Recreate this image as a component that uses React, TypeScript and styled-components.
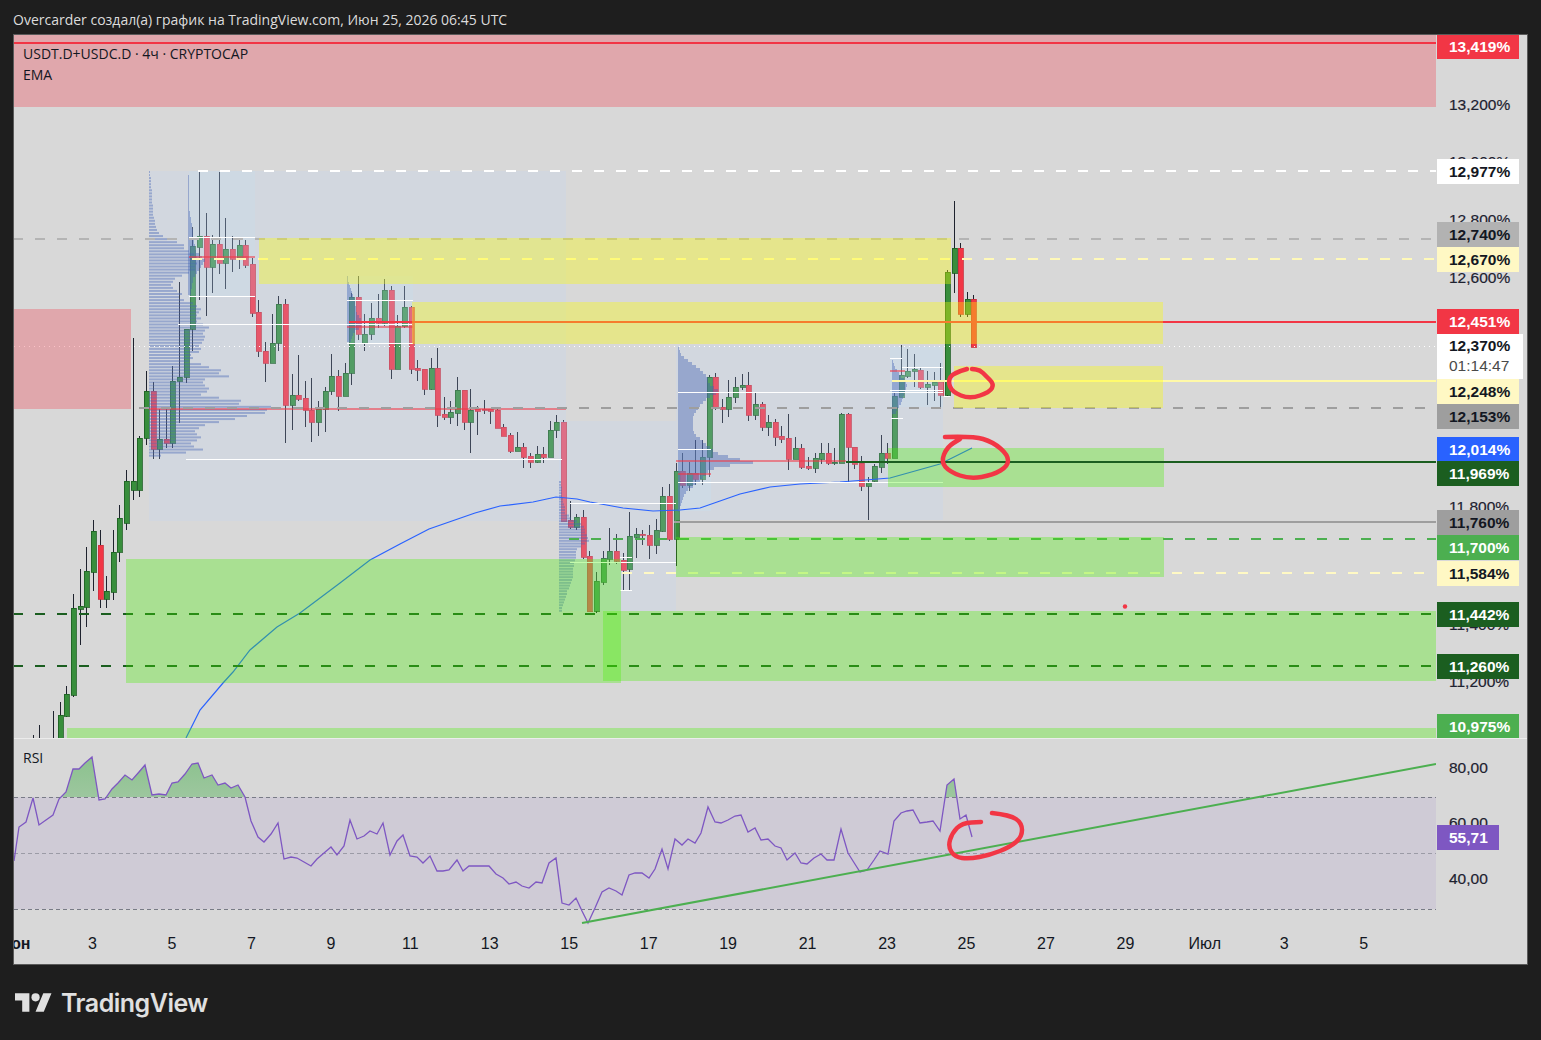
import React from "react";
import styled, {createGlobalStyle} from "styled-components";

// candles: [colour, body top, body bottom, wick top, wick bottom], first one sits at index -12
type Candle = [string, number, number, number, number]
const candles: Candle[] = [
    ["g", 715, 745, 702, 750], ["g", 694, 716, 686, 717], ["g", 608, 695, 594, 697], ["g", 606, 609, 569, 645],
    ["g", 571, 607, 547, 627], ["g", 531, 572, 520, 591], ["r", 545, 599, 530, 608], ["g", 591, 599, 576, 608],
    ["g", 552, 592, 530, 600], ["g", 518, 552, 505, 562], ["g", 481, 523, 470, 530], ["g", 481, 490, 338, 500],
    ["g", 438, 490, 436, 497], ["g", 391, 438, 371, 445], ["r", 391, 449, 382, 459], ["g", 439, 449, 409, 459],
    ["r", 439, 443, 409, 448], ["g", 381, 443, 366, 448], ["g", 377, 381, 282, 423], ["g", 329, 377, 329, 383],
    ["g", 246, 329, 227, 351], ["g", 236, 247, 172, 300], ["r", 236, 267, 213, 316], ["g", 244, 267, 235, 293],
    ["r", 244, 263, 172, 274], ["g", 249, 263, 218, 289], ["r", 249, 259, 236, 272], ["g", 245, 259, 240, 269],
    ["r", 245, 265, 240, 268], ["r", 264, 313, 258, 317], ["r", 312, 351, 300, 357], ["r", 351, 363, 342, 382],
    ["g", 343, 363, 314, 360], ["g", 304, 343, 296, 351], ["r", 304, 405, 299, 443], ["g", 395, 405, 374, 430],
    ["r", 395, 399, 355, 401], ["r", 398, 410, 381, 427], ["r", 410, 422, 378, 442], ["g", 409, 422, 401, 436],
    ["g", 391, 409, 387, 432], ["g", 376, 391, 354, 395], ["r", 376, 396, 370, 411], ["g", 373, 396, 363, 396],
    ["g", 297, 373, 293, 385], ["r", 297, 334, 276, 340], ["g", 334, 343, 314, 351], ["g", 318, 334, 303, 340],
    ["r", 318, 323, 294, 328], ["g", 290, 323, 279, 326], ["r", 290, 369, 286, 379], ["g", 326, 369, 315, 369],
    ["g", 307, 326, 286, 328], ["r", 307, 369, 306, 374], ["r", 368, 370, 360, 381], ["r", 369, 389, 369, 395],
    ["g", 368, 389, 358, 390], ["r", 368, 415, 348, 427], ["r", 414, 417, 397, 420], ["g", 412, 417, 401, 424],
    ["g", 390, 413, 377, 426], ["r", 390, 422, 390, 430], ["g", 410, 422, 389, 453], ["r", 409, 411, 406, 435],
    ["r", 409, 410, 400, 414], ["r", 409, 411, 409, 424], ["r", 410, 428, 408, 428], ["r", 427, 436, 424, 436],
    ["r", 435, 451, 433, 453], ["g", 447, 451, 432, 451], ["r", 447, 457, 443, 468], ["r", 456, 462, 453, 468],
    ["g", 454, 462, 446, 463], ["r", 454, 457, 447, 463], ["g", 430, 457, 421, 457], ["g", 422, 430, 415, 438],
    ["r", 422, 521, 420, 521], ["r", 520, 527, 501, 529], ["g", 517, 527, 514, 530], ["r", 517, 557, 510, 559],
    ["r", 556, 611, 551, 611], ["g", 581, 611, 572, 613], ["g", 558, 582, 551, 585], ["g", 551, 559, 528, 565],
    ["r", 551, 561, 534, 564], ["r", 560, 570, 553, 591], ["g", 536, 569, 512, 591], ["g", 534, 537, 528, 558],
    ["r", 534, 535, 530, 545], ["r", 535, 545, 525, 559], ["g", 530, 545, 519, 554], ["g", 496, 531, 487, 532],
    ["r", 496, 539, 484, 541], ["g", 471, 539, 463, 566], ["r", 471, 485, 453, 488], ["g", 473, 485, 462, 491],
    ["r", 473, 479, 440, 485], ["g", 457, 479, 440, 485], ["g", 377, 457, 375, 477], ["r", 377, 407, 373, 410],
    ["r", 407, 409, 399, 423], ["g", 397, 409, 380, 417], ["g", 387, 397, 377, 403], ["g", 385, 387, 374, 390],
    ["r", 385, 415, 372, 421], ["g", 404, 415, 393, 420], ["r", 404, 427, 402, 431], ["g", 422, 427, 415, 436],
    ["r", 422, 437, 419, 446], ["r", 436, 439, 426, 443], ["r", 438, 459, 414, 470], ["g", 448, 459, 437, 459],
    ["r", 448, 467, 444, 469], ["r", 466, 468, 457, 470], ["g", 458, 468, 453, 473], ["g", 453, 459, 443, 464],
    ["r", 453, 463, 443, 465], ["g", 462, 463, 448, 465], ["g", 414, 463, 413, 463], ["r", 414, 447, 413, 483],
    ["r", 447, 464, 447, 469], ["r", 463, 486, 456, 491], ["g", 482, 486, 477, 520], ["g", 466, 481, 464, 483],
    ["g", 453, 467, 435, 473], ["r", 453, 458, 443, 464], ["g", 396, 458, 393, 458], ["g", 375, 397, 345, 397],
    ["g", 371, 376, 349, 378], ["g", 369, 371, 354, 387], ["r", 370, 387, 368, 389], ["g", 384, 387, 371, 405],
    ["g", 382, 385, 372, 401], ["r", 382, 395, 363, 407], ["g", 272, 395, 270, 397], ["g", 248, 273, 201, 293],
    ["r", 248, 314, 243, 317], ["g", 299, 314, 292, 317], ["r", 299, 347, 295, 347],
]

const rsiPoints = [
    [14, 861], [19, 827], [26, 822], [33, 798], [39, 825], [46, 820], [53, 815], [59, 799], [66, 792], [73, 769],
    [79, 769], [85, 763], [92, 757], [99, 800], [105, 799], [112, 789], [118, 783], [125, 775], [132, 780], [139, 772],
    [145, 765], [152, 795], [159, 794], [166, 795], [172, 783], [178, 782], [185, 774], [192, 764], [198, 763], [204, 778],
    [212, 775], [218, 785], [225, 783], [231, 788], [238, 785], [245, 797], [251, 821], [258, 837], [264, 842], [271, 834],
    [278, 823], [284, 859], [291, 857], [297, 858], [304, 862], [311, 866], [317, 859], [324, 853], [331, 847], [337, 855],
    [344, 846], [350, 820], [357, 839], [364, 836], [370, 831], [377, 834], [383, 823], [390, 855], [397, 841], [403, 835],
    [410, 856], [417, 857], [423, 863], [430, 856], [437, 871], [443, 871], [449, 870], [457, 860], [463, 871], [469, 866],
    [489, 866], [496, 874], [503, 878], [509, 884], [516, 882], [522, 886], [529, 888], [536, 882], [542, 883], [549, 863],
    [556, 858], [562, 903], [569, 905], [576, 898], [582, 911], [588, 923], [595, 908], [602, 892], [609, 888], [616, 891],
    [622, 895], [629, 875], [635, 873], [642, 873], [649, 878], [655, 869], [662, 849], [668, 869], [675, 839], [682, 845],
    [688, 839], [695, 843], [701, 833], [708, 807], [715, 822], [721, 823], [728, 820], [735, 816], [741, 815], [748, 832],
    [755, 828], [761, 840], [768, 839], [775, 846], [781, 848], [787, 860], [795, 853], [801, 863], [807, 864], [814, 858],
    [821, 854], [827, 860], [834, 860], [841, 829], [848, 853], [853, 861], [860, 872], [867, 870], [874, 860], [880, 851],
    [888, 854], [894, 821], [901, 813], [907, 811], [913, 810], [920, 823], [927, 822], [933, 821], [940, 831], [947, 785],
    [954, 779], [960, 819], [966, 815], [972, 837],
]

const emaPoints = "186,738 200,710 223,683 233,672 250,650 277,627 300,613 340,583 370,560 400,544 429,529 475,513 500,506 533,502 556,497 577,499 590,502 623,508 653,511 680,510 700,508 740,494 770,487 800,484 840,482 890,478 940,464 972,448"

// volume profile rows, widths in px from top to bottom
const profileA = [
    1, 1, 2, 2, 2, 2, 3, 3, 3, 3, 3, 4, 4, 4, 4, 5, 6, 6, 7, 8, 10, 14, 18, 28, 35, 35, 40, 45, 48, 47, 48, 46,
    46, 40, 33, 26, 24, 22, 24, 28, 33, 30, 35, 44, 48, 52, 50, 48, 52, 48, 54, 60, 56, 54, 56, 55, 53, 50, 52, 50,
    42, 44, 40, 52, 60, 72, 70, 80, 56, 54, 56, 60, 58, 52, 70, 92, 90, 122, 118, 116, 98, 86, 70, 56, 50, 46, 48, 52, 48, 42, 45, 54, 37, 12,
]
const profileB = [
    2, 2, 3, 3, 3, 3, 4, 4, 5, 6, 6, 6, 10, 12, 18, 22, 25, 26, 26, 28, 29, 30, 26, 22, 18, 17, 17, 17, 16, 15,
    15, 14, 14, 14, 14, 13, 12, 11, 10, 8, 8, 7, 6, 5, 4, 3, 3,
]
const profileC = [
    1, 2, 3, 6, 10, 14, 18, 22, 25, 28, 30, 30, 32, 36, 40, 38, 32, 28, 25, 22, 20, 18, 16, 15, 15, 15, 15, 15, 16, 18,
    22, 25, 28, 32, 35, 40, 50, 62, 75, 52, 36, 30, 28, 25, 22, 18, 15, 10, 8, 6, 5, 4, 3, 2, 1,
]
const profileD = [
    1, 1, 1, 1, 1, 1, 1, 1, 1, 1, 1, 1, 2, 2, 3, 3, 4, 4, 5, 5, 5, 6, 6, 7, 7, 8, 11, 14, 17, 15, 13, 11, 9, 7, 5, 5, 4, 4, 3, 3,
]
const profileE = [1, 1, 2, 3, 4, 5, 6, 7, 8, 8, 9, 9, 10, 12, 14, 15, 14, 12, 8, 6, 5, 4]
const profileG = [1, 2, 3, 5, 7, 9, 12, 14, 15, 14, 13, 12, 11, 10, 9, 7, 5, 4]

const whiteLines = [
    [189, 255, 237.5], [189, 255, 296], [178, 412, 324], [347, 413, 300], [347, 413, 343], [186, 562, 459],
    [570, 676, 503], [570, 676, 562], [620, 632, 557], [620, 632, 590], [678, 943, 392], [678, 943, 482],
    [678, 711, 449], [890, 902, 358], [902, 943, 367], [890, 943, 390], [891, 903, 418], [944, 950, 396],
]
const pocLines = [
    [189, 255, 257], [347, 413, 326.5], [149, 566, 408.5], [676, 846, 461], [678, 711, 474], [890, 905, 371],
]
const dashedLines = [
    {x: 198, y: 171, c: "#ffffff"},
    {x: 13, y: 238.5, c: "#b4b4b4"},
    {x: 192, y: 259, c: "#fff9b8"},
    {x: 139, y: 408, c: "#9e9e9e"},
    {x: 569, y: 538.5, c: "#4caf50"},
    {x: 622, y: 573, c: "#fff9c4"},
    {x: 13, y: 613.5, c: "#1b5e20"},
    {x: 13, y: 665.5, c: "#1b5e20"},
]
const zones = [
    {x: 14, y: 35, w: 1422, h: 72, c: "rgba(242,54,69,.3)"},
    {x: 14, y: 309, w: 117, h: 100, c: "rgba(242,54,69,.3)"},
    {x: 259, y: 238, w: 692, h: 45.5, c: "rgba(255,255,0,.35)"},
    {x: 412, y: 302, w: 751, h: 42, c: "rgba(255,255,0,.35)"},
    {x: 954, y: 366, w: 209, h: 42, c: "rgba(255,255,0,.35)"},
    {x: 126, y: 559, w: 495, h: 124, c: "rgba(72,244,0,.32)"},
    {x: 603, y: 611, w: 833, h: 70, c: "rgba(72,244,0,.32)"},
    {x: 676, y: 537, w: 488, h: 40, c: "rgba(72,244,0,.32)"},
    {x: 888, y: 448, w: 276, h: 39, c: "rgba(72,244,0,.32)"},
    {x: 67, y: 728, w: 1369, h: 10, c: "rgba(72,244,0,.32)"},
]

const priceTicks = [
    ["13,200%", 105], ["13,000%", 162], ["12,800%", 220], ["12,600%", 278], ["11,800%", 507], ["11,400%", 625], ["11,200%", 682],
]
const priceTags = [
    {t: "13,419%", y: 46.5, bg: "#f23645", fg: "#fff"},
    {t: "12,977%", y: 171.5, bg: "#fff", fg: "#131722"},
    {t: "12,740%", y: 234.5, bg: "#b2b2b2", fg: "#131722"},
    {t: "12,670%", y: 259.5, bg: "#fff8c4", fg: "#131722"},
    {t: "12,451%", y: 321, bg: "#f23645", fg: "#fff"},
    {t: "12,248%", y: 391, bg: "#fff8c4", fg: "#131722"},
    {t: "12,153%", y: 416.5, bg: "#9e9e9e", fg: "#131722"},
    {t: "12,014%", y: 449, bg: "#2962ff", fg: "#fff"},
    {t: "11,969%", y: 473.5, bg: "#1b5e20", fg: "#fff"},
    {t: "11,760%", y: 522.5, bg: "#9e9e9e", fg: "#131722"},
    {t: "11,700%", y: 547.5, bg: "#4caf50", fg: "#fff"},
    {t: "11,584%", y: 573.5, bg: "#fff8c4", fg: "#131722"},
    {t: "11,442%", y: 614.5, bg: "#1b5e20", fg: "#fff"},
    {t: "11,260%", y: 666.5, bg: "#1b5e20", fg: "#fff"},
    {t: "10,975%", y: 726, bg: "#4caf50", fg: "#fff"},
]
const timeLabels = ["Июн", "3", "5", "7", "9", "11", "13", "15", "17", "19", "21", "23", "25", "27", "29", "Июл", "3", "5"]

const smooth = (pts: number[][]) => {
    let d = `M${pts[0][0]} ${pts[0][1]}`
    for (let i = 1; i < pts.length - 1; i++) {
        const mx = (pts[i][0] + pts[i + 1][0]) / 2
        const my = (pts[i][1] + pts[i + 1][1]) / 2
        d += ` Q${pts[i][0]} ${pts[i][1]} ${mx} ${my}`
    }
    const last = pts[pts.length - 1]
    return d + ` L${last[0]} ${last[1]}`
}

const scribbles = [
    [[967, 369], [953, 373], [948, 381], [952, 392], [970, 399], [990, 392], [994, 384], [986, 376], [980, 370], [972, 369]],
    [[945, 437], [973, 436], [993, 442], [1008, 455], [1008, 466], [993, 475], [970, 479], [950, 472], [941, 462], [947, 447], [960, 439]],
    [[992, 813], [1010, 815], [1022, 823], [1022, 837], [1010, 847], [990, 855], [969, 859], [955, 857], [948, 847], [952, 833], [962, 823], [981, 822]],
]

const Profile: React.FC<{x: number, y: number, rows: number[], step?: number, bar?: number}> = ({x, y, rows, step = 3, bar = 2}) => <g fill="rgba(70,100,180,.42)">
    {rows.map((w, i) => <rect key={i} x={x} y={y + i * step} width={w} height={bar}/>)}
</g>

const Candles = () => <g shapeRendering="crispEdges">
    {candles.map(([kind, top, bottom, high, low], i) => {
        const x = Math.round(139.3 + (i - 12) * 6.62)
        return <g key={i}>
            <line x1={x + .5} x2={x + .5} y1={high} y2={low} stroke="#1e222d"/>
            <rect x={x - 2} y={top} width={5} height={bottom - top}
                  fill={kind === "g" ? "#388e3c" : "#f23645"}
                  stroke={kind === "g" ? "#1b5e20" : "#c9303d"} strokeWidth={.8}/>
        </g>
    })}
    {[33, 39, 53].map((x, i) => <line key={x} x1={x + .5} x2={x + .5} y1={[735, 725, 711][i]} y2={738} stroke="#1e222d"/>)}
</g>

const PriceChart = () => <PlotSvg viewBox="14 35 1422 703">
    <Candles/>
    <rect x={149} y={171} width={417} height={350} fill="rgba(191,216,255,.2)"/>
    <rect x={559} y={421} width={117} height={190} fill="rgba(191,216,255,.2)"/>
    <rect x={676} y={345} width={267} height={175} fill="rgba(191,216,255,.2)"/>
    <rect x={189} y={171} width={66} height={125} fill="rgba(191,230,255,.15)"/>
    <rect x={347} y={276} width={66} height={67} fill="rgba(191,230,255,.15)"/>
    <rect x={678} y={449} width={33} height={62} fill="rgba(191,230,255,.2)"/>
    <rect x={890} y={347} width={53} height={60} fill="rgba(191,230,255,.2)"/>

    <Profile x={149} y={171} rows={profileA} step={3.05}/>
    <Profile x={559} y={481} rows={profileB} step={2.8}/>
    <Profile x={678} y={347} rows={profileC} bar={3}/>
    <Profile x={188} y={175} rows={profileD} bar={3}/>
    <Profile x={347} y={276} rows={profileE} bar={3}/>
    <Profile x={892} y={360} rows={profileG} bar={3}/>

    <polyline points={emaPoints} fill="none" stroke="#2962ff" strokeWidth={1.2}/>

    <g shapeRendering="crispEdges">
        {pocLines.map(([a, b, y]) => <line key={a + "" + y} x1={a} x2={b} y1={y} y2={y} stroke="rgba(242,54,69,.55)" strokeWidth={2}/>)}
        {whiteLines.map(([a, b, y]) => <line key={a + "" + y} x1={a} x2={b} y1={y} y2={y} stroke="#fff" strokeWidth={1}/>)}
        {dashedLines.map(l => <line key={l.y} x1={l.x} x2={1436} y1={l.y} y2={l.y} stroke={l.c} strokeWidth={2} strokeDasharray="10 12"/>)}
        <line x1={14} x2={1436} y1={43} y2={43} stroke="#f23645" strokeWidth={2}/>
        <line x1={349} x2={1436} y1={322} y2={322} stroke="#f23645" strokeWidth={2}/>
        <line x1={892} x2={1436} y1={381} y2={381} stroke="#fff9a8" strokeWidth={2}/>
        <line x1={674} x2={1436} y1={522} y2={522} stroke="#9e9e9e" strokeWidth={2}/>
        <line x1={14} x2={1436} y1={346.5} y2={346.5} stroke="#fff" strokeWidth={1} strokeDasharray="1 4"/>
        {zones.map(z => <rect key={z.x + "" + z.y} x={z.x} y={z.y} width={z.w} height={z.h} fill={z.c}/>)}
        <line x1={846} x2={1436} y1={462} y2={462} stroke="#1b5e20" strokeWidth={2}/>
    </g>
    <circle cx={1125} cy={606.5} r={2.2} fill="#f23645"/>
    {scribbles.slice(0, 2).map((pts, i) => <path key={i} d={smooth(pts)} fill="none" stroke="#f23645" strokeWidth={4.5} strokeLinecap="round"/>)}
</PlotSvg>

const RsiChart = () => {
    const line = rsiPoints.map(p => p.join(",")).join(" ")
    return <PlotSvg viewBox="14 739 1422 186">
        <defs>
            <linearGradient id="obFill" x1="0" x2="0" y1="0" y2="1">
                <stop offset="0" stopColor="#4caf50" stopOpacity=".55"/>
                <stop offset="1" stopColor="#4caf50" stopOpacity=".02"/>
            </linearGradient>
            <clipPath id="obClip"><rect x={14} y={740} width={1422} height={57}/></clipPath>
        </defs>
        <rect x={14} y={797} width={1422} height={112} fill="rgba(126,87,194,.1)"/>
        <rect x={14} y={757} width={1422} height={40} fill="none"/>
        <polygon points={`14,797 ${line} 972,797`} fill="url(#obFill)" clipPath="url(#obClip)"/>
        <g shapeRendering="crispEdges" strokeWidth={1} strokeDasharray="4 3">
            <line x1={14} x2={1436} y1={797.5} y2={797.5} stroke="#787b86"/>
            <line x1={14} x2={1436} y1={853.5} y2={853.5} stroke="rgba(120,123,134,.6)"/>
            <line x1={14} x2={1436} y1={909.5} y2={909.5} stroke="#787b86"/>
        </g>
        <polyline points={line} fill="none" stroke="#7e57c2" strokeWidth={1.3}/>
        <line x1={582} y1={923} x2={1436} y2={764} stroke="#4caf50" strokeWidth={2}/>
        <path d={smooth(scribbles[2])} fill="none" stroke="#f23645" strokeWidth={4.5} strokeLinecap="round"/>
    </PlotSvg>
}

export default function App() {
    return <Page>
        <GlobalStyle/>
        <Header>Overcarder создал(а) график на TradingView.com, Июн 25, 2026 06:45 UTC</Header>
        <Frame>
            <Plot>
                <PriceChart/>
                <Legend>
                    <div>USDT.D+USDC.D · 4ч · CRYPTOCAP</div>
                    <div>EMA</div>
                </Legend>
            </Plot>
            <Axis>
                {priceTicks.map(([t, y]) => <Tick key={t} $y={+y - 35}>{t}</Tick>)}
                {priceTags.map(p => <Tag key={p.t} $y={p.y - 35} $bg={p.bg} $fg={p.fg}>{p.t}</Tag>)}
                <Countdown>
                    <span>12,370%</span>
                    <small>01:14:47</small>
                </Countdown>
            </Axis>
            <RsiPlot>
                <RsiChart/>
                <Legend>RSI</Legend>
            </RsiPlot>
            <RsiAxis>
                <Tick $y={29}>80,00</Tick>
                <Tick $y={84}>60,00</Tick>
                <Tick $y={140}>40,00</Tick>
                <Tag $y={98} $bg="#7e57c2" $fg="#fff" $short>55,71</Tag>
            </RsiAxis>
            <TimeAxis>
                {timeLabels.map((t, i) => <TimeLabel key={i} $bold={i === 0}>{t}</TimeLabel>)}
            </TimeAxis>
        </Frame>
        <Footer>
            <svg width="37" height="19" viewBox="0 4 36 18">
                <path fill="#e0e0e0" d="M14 22H7V11H0V4h14v18zM28 22h-8l7.5-18h8L28 22z"/>
                <circle fill="#e0e0e0" cx="20" cy="8" r="4"/>
            </svg>
            <Brand>TradingView</Brand>
        </Footer>
    </Page>
}

const GlobalStyle = createGlobalStyle`
  html, body {
    margin: 0;
    background: #1e1e1e;
  }
`

const Page = styled.div`
  width: 1541px;
  height: 1040px;
  overflow: hidden;
  background: #1e1e1e;
  font-family: "Liberation Sans", Arial, sans-serif;
`

const Header = styled.div`
  height: 34px;
  padding: 11px 0 0 13px;
  box-sizing: border-box;
  color: #dcdcdc;
  font-family: "Open Sans", sans-serif;
  font-size: 14px;
  line-height: 17px;
  white-space: nowrap;
`

const Frame = styled.div`
  margin-left: 13px;
  width: 1515px;
  height: 931px;
  box-sizing: border-box;
  border: 1px solid #5a5a5a;
  background: #d8d8d8;
  display: grid;
  grid-template-columns: 1422px 91px;
  grid-template-rows: 703px 187px 39px;
`

const Plot = styled.div`
  position: relative;
  overflow: hidden;
`

const PlotSvg = styled.svg`
  display: block;
  width: 100%;
  height: 100%;
`

const Legend = styled.div`
  position: absolute;
  left: 9px;
  top: 8px;
  color: #131722;
  font-family: "Open Sans", sans-serif;
  font-size: 14px;
  line-height: 21px;
  white-space: nowrap;
`

const Axis = styled.div`
  position: relative;
  overflow: hidden;
`

const RsiPlot = styled(Plot)`
  border-top: 1px solid #ececec;
`

const RsiAxis = styled(Axis)`
  border-top: 1px solid #ececec;
`

const Tick = styled.span<{$y: number}>`
  position: absolute;
  left: 13px;
  top: ${p => p.$y - 10}px;
  color: #1e2230;
  font-size: 15.5px;
  line-height: 20px;
  -webkit-text-stroke: .2px #1e2230;
  white-space: nowrap;
`

const Tag = styled.span<{$y: number, $bg: string, $fg: string, $short?: boolean}>`
  position: absolute;
  left: 1px;
  top: ${p => p.$y - 12.5}px;
  width: ${p => p.$short ? "62px" : "82px"};
  height: 25px;
  box-sizing: border-box;
  padding-left: 12px;
  background: ${p => p.$bg};
  color: ${p => p.$fg};
  font-size: 15.5px;
  font-weight: 700;
  line-height: 25px;
  white-space: nowrap;
`

const Countdown = styled.div`
  position: absolute;
  left: 1px;
  top: 299px;
  width: 86px;
  height: 45px;
  box-sizing: border-box;
  padding: 2px 0 0 12px;
  background: #fff;
  color: #131722;
  font-size: 15.5px;
  font-weight: 700;
  line-height: 20px;

  span, small {
    display: block;
    font-size: 15.5px;
  }

  small {
    color: #4a4a4a;
    font-weight: 400;
  }
`

const TimeAxis = styled.div`
  grid-column: 1 / 3;
  display: flex;
  overflow: hidden;
`

const TimeLabel = styled.span<{$bold?: boolean}>`
  flex: 0 0 79.46px;
  text-align: center;
  color: #131722;
  font-size: 16px;
  font-weight: ${p => p.$bold ? 700 : 400};
  line-height: 38px;

  &:first-child {
    margin-left: -40.7px;
  }
`

const Footer = styled.div`
  display: flex;
  align-items: center;
  gap: 9px;
  height: 75px;
  padding-left: 15px;
`

const Brand = styled.span`
  color: #e0e0e0;
  font-family: Inter, sans-serif;
  font-size: 25px;
  font-weight: 600;
  letter-spacing: -.5px;
`
